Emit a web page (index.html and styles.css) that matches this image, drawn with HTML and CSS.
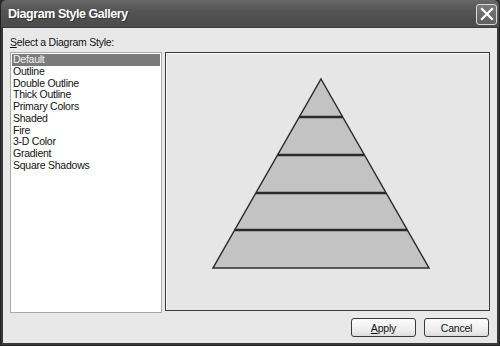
FILE: index.html
```html
<!DOCTYPE html>
<html lang="en">
<head>
  <meta charset="UTF-8">
  <title>Diagram Style Gallery</title>
  <link rel="stylesheet" href="styles.css">
</head>
<body>
  <div class="window">
    <div class="titlebar">
      <span class="title">Diagram Style Gallery</span>
      <button class="close-btn" aria-label="Close">
        <svg width="14" height="14" viewBox="0 0 14 14">
          <path d="M2 2 L12 12 M12 2 L2 12" stroke="#fff" stroke-width="2.2" stroke-linecap="square"/>
        </svg>
      </button>
    </div>

    <div class="content">
      <label class="field-label"><u>S</u>elect a Diagram Style:</label>

      <div class="main-row">
        <ul class="style-list">
          <li class="selected">Default</li>
          <li>Outline</li>
          <li>Double Outline</li>
          <li>Thick Outline</li>
          <li>Primary Colors</li>
          <li>Shaded</li>
          <li>Fire</li>
          <li>3-D Color</li>
          <li>Gradient</li>
          <li>Square Shadows</li>
        </ul>

        <div class="preview">
          <svg class="pyramid" width="323" height="257" viewBox="0 0 323 257">
            <polygon points="155,26 263,215 47,215" fill="#c3c3c3" stroke="#2e2e2e" stroke-width="1.5" stroke-linejoin="miter"/>
            <g stroke="#2a2a2a" stroke-width="2.5">
              <line x1="133" y1="64" x2="177" y2="64"/>
              <line x1="111.5" y1="102" x2="198.5" y2="102"/>
              <line x1="90" y1="140" x2="220" y2="140"/>
              <line x1="68.5" y1="177" x2="241.5" y2="177"/>
            </g>
          </svg>
        </div>
      </div>

      <div class="button-row">
        <button class="btn"><u>A</u>pply</button>
        <button class="btn">Cancel</button>
      </div>
    </div>
  </div>
</body>
</html>
```

FILE: styles.css
```css
/* base */
body {
  margin: 0;
  width: 500px;
  height: 346px;
  overflow: hidden;
  font-family: "Liberation Sans", Arial, sans-serif;
  font-size: 10.5px;
  letter-spacing: -0.25px;
  background: #2b2b2b;
}

/* window frame */
.window {
  box-sizing: border-box;
  width: 500px;
  height: 346px;
  display: flex;
  flex-direction: column;
  background: #3a3a3a;
  border: 1px solid #222;
  border-top: none;
  border-radius: 6px 6px 0 0;
  overflow: hidden;
}

.titlebar {
  height: 27px;
  flex-shrink: 0;
  display: flex;
  align-items: center;
  justify-content: space-between;
  padding: 0 2px 0 7px;
  background: linear-gradient(#686868, #545454 40%, #4b4b4b);
  border-bottom: 1px solid #3c3c3c;
}

.title {
  color: #fff;
  font-weight: bold;
  font-size: 12.5px;
  letter-spacing: -0.45px;
  text-shadow: 1px 1px 0 #333;
}

.close-btn {
  width: 21px;
  height: 21px;
  padding: 0;
  display: flex;
  align-items: center;
  justify-content: center;
  background: linear-gradient(#7a7a7a, #606060);
  border: 1px solid #d8d8d8;
  border-radius: 3px;
  margin-top: 1px;
}

/* dialog body */
.content {
  flex: 1;
  display: flex;
  flex-direction: column;
  margin: 0 2px 2px 2px;
  padding: 7px 7px 6px 7px;
  background: #e8e8e8;
}

.field-label {
  display: block;
  height: 14px;
  line-height: 14px;
  color: #111;
  margin-bottom: 3px;
}

.main-row {
  display: flex;
  gap: 3px;
  height: 261px;
}

/* list box */
.style-list {
  box-sizing: border-box;
  width: 152px;
  height: 261px;
  margin: 0;
  padding: 1px;
  list-style: none;
  background: #fff;
  border: 1px solid #a8a8a8;
}

.style-list li {
  height: 11.75px;
  line-height: 11.75px;
  padding-left: 1px;
  color: #111;
  white-space: nowrap;
}

.style-list li.selected {
  background: #7a7a7a;
  color: #f4f4f4;
}

/* preview pane */
.preview {
  box-sizing: border-box;
  width: 325px;
  height: 259px;
  background: #e6e6e6;
  border: 1px solid #3a3a3a;
  box-shadow: inset 1px 1px 0 #fafafa;
}

.pyramid {
  display: block;
}

/* buttons */
.button-row {
  display: flex;
  justify-content: flex-end;
  gap: 8px;
  margin-top: 5px;
  padding-right: 1px;
}

.btn {
  box-sizing: border-box;
  width: 65px;
  height: 19px;
  padding: 0;
  font-family: "Liberation Sans", Arial, sans-serif;
  font-size: 10.5px;
  letter-spacing: -0.2px;
  color: #111;
  background: linear-gradient(#fbfbfb, #ececec 70%, #dcdcdc);
  border: 1px solid #3a3a3a;
  border-radius: 3px;
}
```
